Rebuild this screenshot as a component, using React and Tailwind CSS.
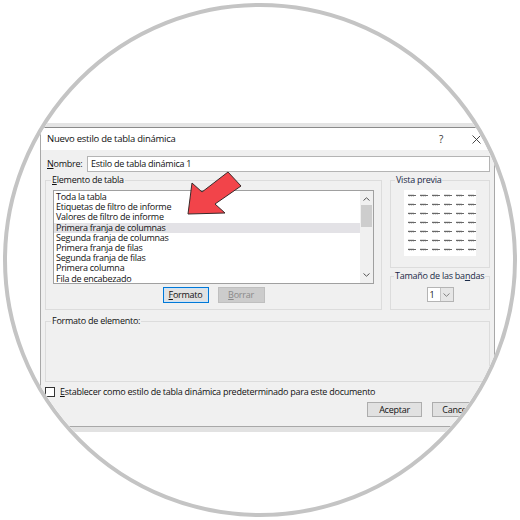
import React from 'react';

const items = [
  'Toda la tabla',
  'Etiquetas de filtro de informe',
  'Valores de filtro de informe',
  'Primera franja de columnas',
  'Segunda franja de columnas',
  'Primera franja de filas',
  'Segunda franja de filas',
  'Primera columna',
  'Fila de encabezado',
];

function Mark() {
  return (
    <svg width="8" height="3" viewBox="0 0 8 3">
      <path d="M0 1.5H8" stroke="#6a6a6a" strokeWidth="1" />
      <path d="M0.8 0.3L2 1.5L0.8 2.7M2.8 0.3L4 1.5L2.8 2.7M4.8 0.3L6 1.5L4.8 2.7" stroke="#6a6a6a" strokeWidth="0.6" fill="none" />
    </svg>
  );
}

function Arrow() {
  return (
    <svg className="absolute left-[146px] top-[47px]" width="58" height="48" viewBox="0 0 58 48">
      <polygon
        points="2,44 6,13 16,22 42,2 55,16 29,34 39,43"
        fill="#f2444a"
        stroke="#3a2a2a"
        strokeWidth="1"
        strokeLinejoin="round"
      />
    </svg>
  );
}

export default function App() {
  return (
    <div className="w-[520px] h-[520px] bg-white flex items-center justify-center font-['Open_Sans',sans-serif] text-[9px] tracking-[-0.25px] text-[#111]">
      <div className="w-[514px] h-[514px] rounded-full border-4 border-[#c4c4c4] overflow-hidden bg-white">
        <div className="relative ml-[33px] mt-[116px] w-[455px]">
          <div className="h-[4px] bg-[#e4e4e4]" />
          <div className="border border-[#a8a8a8] border-t-[#8a8a8a]">
            {/* title bar */}
            <div className="h-[22px] bg-white flex items-center pl-[6px] pr-[13px]">
              <span className="flex-1 text-[9.5px]">Nuevo estilo de tabla dinámica</span>
              <span className="text-[10px] text-[#333] mr-[29px]">?</span>
              <svg width="9" height="9" viewBox="0 0 9 9">
                <path d="M0.5 0.5L8.5 8.5M8.5 0.5L0.5 8.5" stroke="#333" strokeWidth="0.9" />
              </svg>
            </div>

            {/* body */}
            <div className="bg-[#f0f0f0] pl-[4px] pr-[4px] pt-[6px] pb-[9px]">
              <div className="flex items-center h-[16px]">
                <span className="w-[42px] pl-[2px]">
                  <span className="underline">N</span>ombre:
                </span>
                <div className="flex-1 h-[16px] bg-white border border-[#b4b4b4] flex items-center pl-[3px]">
                  Estilo de tabla dinámica 1
                </div>
              </div>

              <div className="flex gap-[8px] mt-[2px]">
                <fieldset className="w-[337px] border border-[#dcdcdc] px-[7px] pb-[6px]">
                  <legend className="ml-[-2px] px-[1px] leading-[12px]">
                    <span className="underline">E</span>lemento de tabla
                  </legend>
                  <div className="mt-[4px] h-[94px] bg-white border border-[#a0a0a0] flex">
                    <div className="flex-1 pt-[1px]">
                      {items.map((t, i) => (
                        <div
                          key={t}
                          className={`h-[10.2px] leading-[10.2px] pl-[2px] ${i === 3 ? 'bg-[#e3e2e6]' : ''}`}
                        >
                          {t}
                        </div>
                      ))}
                    </div>
                    <div className="w-[13px] bg-[#f0f0f0] flex flex-col items-center">
                      <svg className="mt-[6px]" width="7" height="4" viewBox="0 0 7 4">
                        <path d="M0.5 3.5L3.5 0.8L6.5 3.5" stroke="#555" strokeWidth="1" fill="none" />
                      </svg>
                      <div className="mt-[4px] w-[11px] h-[22px] bg-[#cdcdcd]" />
                      <div className="flex-1" />
                      <svg className="mb-[6px]" width="7" height="4" viewBox="0 0 7 4">
                        <path d="M0.5 0.5L3.5 3.2L6.5 0.5" stroke="#555" strokeWidth="1" fill="none" />
                      </svg>
                    </div>
                  </div>
                  <div className="flex justify-center gap-[9px] mt-[3px]">
                    <div className="w-[46px] h-[16px] bg-[#e1e1e1] border border-[#0078d7] shadow-[inset_0_0_0_1px_#cfe3f5] flex items-center justify-center">
                      <span>
                        <span className="underline">F</span>ormato
                      </span>
                    </div>
                    <div className="w-[47px] h-[16px] bg-[#cccccc] border border-[#bfbfbf] flex items-center justify-center text-[#8a8a8a]">
                      <span>
                        <span className="underline">B</span>orrar
                      </span>
                    </div>
                  </div>
                </fieldset>

                <div className="w-[100px] flex flex-col">
                  <fieldset className="border border-[#dcdcdc] pb-[11px]">
                    <legend className="ml-[4px] px-[1px] leading-[12px] text-[#1b2a48]">Vista previa</legend>
                    <div className="mt-[4px] mx-auto w-[72px] h-[66px] bg-white pl-[4px] pt-[4px]">
                      <div className="grid grid-cols-6 gap-x-[4px] gap-y-[6px] w-[68px]">
                        {Array.from({ length: 42 }).map((_, i) => (
                          <Mark key={i} />
                        ))}
                      </div>
                    </div>
                  </fieldset>
                  <fieldset className="mt-[2px] border border-[#dcdcdc] pb-[7px]">
                    <legend className="ml-[3px] px-[1px] leading-[12px] whitespace-nowrap text-[#1b2a48]">
                      Tamaño de las ba<span className="underline">n</span>das
                    </legend>
                    <div className="mt-[5px] flex justify-center">
                      <div className="flex h-[15px] border border-[#b4b4b4]">
                        <div className="w-[12px] bg-white flex items-center pl-[2px]">1</div>
                        <div className="w-[13px] bg-[#e6e6e6] border-l border-[#c4c4c4] flex items-center justify-center">
                          <svg width="7" height="4" viewBox="0 0 7 4">
                            <path d="M0.5 0.5L3.5 3.3L6.5 0.5" stroke="#777" strokeWidth="0.9" fill="none" />
                          </svg>
                        </div>
                      </div>
                    </div>
                  </fieldset>
                </div>
              </div>

              <fieldset className="mt-[5px] h-[67px] border border-[#dcdcdc]">
                <legend className="ml-[5px] px-[1px] leading-[12px]">Formato de elemento:</legend>
              </fieldset>

              <div className="mt-[5px] flex items-center h-[10px]">
                <div className="w-[10px] h-[10px] bg-white border border-[#333]" />
                <span className="ml-[5px]">
                  <span className="underline">E</span>stablecer como estilo de tabla dinámica predeterminado para este documento
                </span>
              </div>

              <div className="mt-[5px] flex justify-end gap-[10px] pr-[3px]">
                <div className="w-[55px] h-[15px] bg-[#e1e1e1] border border-[#adadad] flex items-center justify-center">
                  Aceptar
                </div>
                <div className="w-[55px] h-[15px] bg-[#e1e1e1] border border-[#adadad] flex items-center justify-center">
                  Cancelar
                </div>
              </div>
            </div>
          </div>
          <div className="h-[5px] bg-[#e2e2e2]" />
          <Arrow />
        </div>
      </div>
    </div>
  );
}
